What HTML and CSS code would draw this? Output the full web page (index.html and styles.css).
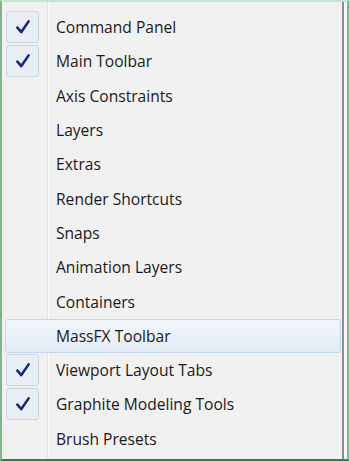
FILE: index.html
```html
<!DOCTYPE html>
<html>
<head>
<meta charset="utf-8">
<link rel="stylesheet" href="styles.css">
</head>
<body>
<div class="frame">
  <div class="menu">
    <div class="sep"></div>
    <ul class="items">
      <li class="item checked"><span class="box"><svg viewBox="0 0 16 16"><path d="M3 8.5 L6.5 12.5 L13 3"/></svg></span><span class="label">Command Panel</span></li>
      <li class="item checked"><span class="box"><svg viewBox="0 0 16 16"><path d="M3 8.5 L6.5 12.5 L13 3"/></svg></span><span class="label">Main Toolbar</span></li>
      <li class="item"><span class="nobox"></span><span class="label">Axis Constraints</span></li>
      <li class="item"><span class="nobox"></span><span class="label">Layers</span></li>
      <li class="item"><span class="nobox"></span><span class="label">Extras</span></li>
      <li class="item"><span class="nobox"></span><span class="label">Render Shortcuts</span></li>
      <li class="item"><span class="nobox"></span><span class="label">Snaps</span></li>
      <li class="item"><span class="nobox"></span><span class="label">Animation Layers</span></li>
      <li class="item"><span class="nobox"></span><span class="label">Containers</span></li>
      <li class="item hover"><span class="nobox"></span><span class="label">MassFX Toolbar</span></li>
      <li class="item checked"><span class="box"><svg viewBox="0 0 16 16"><path d="M3 8.5 L6.5 12.5 L13 3"/></svg></span><span class="label">Viewport Layout Tabs</span></li>
      <li class="item checked"><span class="box"><svg viewBox="0 0 16 16"><path d="M3 8.5 L6.5 12.5 L13 3"/></svg></span><span class="label">Graphite Modeling Tools</span></li>
      <li class="item"><span class="nobox"></span><span class="label">Brush Presets</span></li>
    </ul>
  </div>
</div>
</body>
</html>
```
FILE: styles.css
```css
html, body {
  margin: 0;
  padding: 0;
  background: #f0f0f0;
}
.frame {
  width: 349px;
  height: 461px;
  box-sizing: border-box;
  border-top: 2px solid #bfe9cf;
  border-left: 2px solid #7fb68c;
  border-right: 2px solid #7fb68c;
  border-bottom: 2px solid #3d7a4e;
  background: #f7f7f7;
}
.menu {
  position: relative;
  width: 342px;
  height: 100%;
  box-sizing: border-box;
  background: #f1f1f1;
  border-right: 2px solid #8d8d8d;
  padding: 8px 0 0 3px;
}
.sep {
  position: absolute;
  left: 45px;
  top: 0;
  bottom: 0;
  width: 1px;
  background: #e2e3e3;
  border-right: 1px solid #fbfbfb;
}
.items {
  list-style: none;
  margin: 0;
  padding: 0;
  position: relative;
}
.item {
  display: flex;
  align-items: center;
  height: 34.3px;
  font-family: "Open Sans", "Noto Sans", sans-serif;
  font-size: 15.6px;
  color: #1a1a1a;
  box-sizing: border-box;
  border: 1px solid transparent;
  border-radius: 3px;
  width: 336px;
}
.item.hover {
  background: linear-gradient(#f2f6fb, #e3ecf6);
  border-color: #c4d6ea;
}
.box, .nobox {
  width: 33px;
  height: 32px;
  flex: none;
  box-sizing: border-box;
  display: flex;
  align-items: center;
  justify-content: center;
}
.box {
  background: #e9eef4;
  border: 1px solid #cdd5de;
  border-radius: 3px;
}
.box svg {
  width: 18px;
  height: 18px;
}
.box path {
  fill: none;
  stroke: #1a2580;
  stroke-width: 2.3;
  stroke-linecap: round;
  stroke-linejoin: round;
}
.label {
  margin-left: 17px;
}
```
